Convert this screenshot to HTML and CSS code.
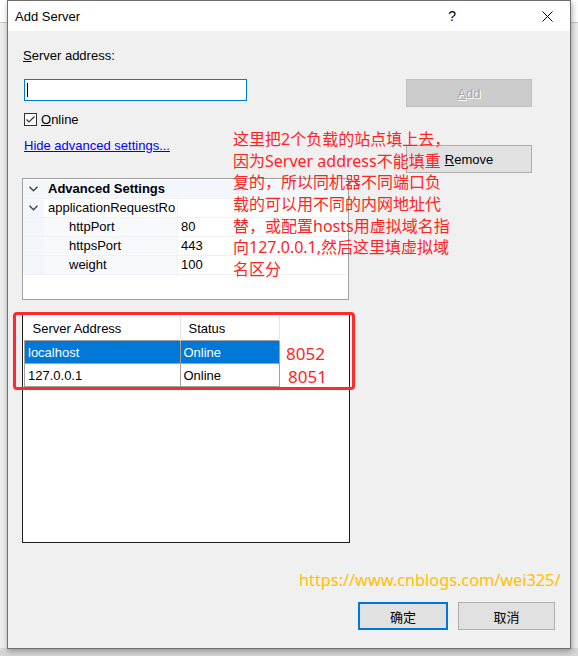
FILE: index.html
```html
<!DOCTYPE html>
<html lang="zh-CN">
<head>
    <meta charset="UTF-8">
    <meta name="viewport" content="width=device-width, initial-scale=1.0">
    <title>Add Server</title>
    <link rel="stylesheet" href="styles.css">
</head>
<body>
    <div id="desktop">
        <div id="dialog">
            <div id="title-bar">
                <span id="title-text">Add Server</span>
                <span id="help-btn">?</span>
                <svg id="close-btn" width="11" height="11" viewBox="0 0 11 11">
                    <path d="M0.5 0.5 L10.5 10.5 M10.5 0.5 L0.5 10.5" stroke="#000" stroke-width="1" fill="none"/>
                </svg>
            </div>

            <div id="main">
                <div id="left-col">
                    <div class="field-label"><u>S</u>erver address:</div>
                    <div id="address-box"><span class="caret"></span></div>

                    <div id="online-row">
                        <svg class="checkbox" width="13" height="13" viewBox="0 0 13 13">
                            <rect x="0.5" y="0.5" width="12" height="12" fill="#fff" stroke="#333"/>
                            <path d="M2.5 6.5 L5 9 L10.5 3.5" stroke="#333" stroke-width="1.2" fill="none"/>
                        </svg>
                        <span><u>O</u>nline</span>
                    </div>

                    <a id="advanced-link" href="#">Hide advanced settings...</a>

                    <div id="prop-grid">
                        <div class="pg-row pg-category">
                            <div class="pg-gutter">
                                <svg width="9" height="6" viewBox="0 0 9 6"><path d="M0.5 0.8 L4.5 4.8 L8.5 0.8" stroke="#444" stroke-width="1.4" fill="none"/></svg>
                            </div>
                            <div class="pg-name pg-wide">Advanced Settings</div>
                        </div>
                        <div class="pg-row">
                            <div class="pg-gutter">
                                <svg width="9" height="6" viewBox="0 0 9 6"><path d="M0.5 0.8 L4.5 4.8 L8.5 0.8" stroke="#444" stroke-width="1.4" fill="none"/></svg>
                            </div>
                            <div class="pg-name">applicationRequestRo</div>
                            <div class="pg-value"></div>
                        </div>
                        <div class="pg-row">
                            <div class="pg-gutter"></div>
                            <div class="pg-name pg-child">httpPort</div>
                            <div class="pg-value">80</div>
                        </div>
                        <div class="pg-row">
                            <div class="pg-gutter"></div>
                            <div class="pg-name pg-child">httpsPort</div>
                            <div class="pg-value">443</div>
                        </div>
                        <div class="pg-row">
                            <div class="pg-gutter"></div>
                            <div class="pg-name pg-child">weight</div>
                            <div class="pg-value">100</div>
                        </div>
                    </div>

                    <div id="server-list">
                        <table>
                            <thead>
                                <tr>
                                    <th class="col-addr">Server Address</th>
                                    <th class="col-status">Status</th>
                                </tr>
                            </thead>
                            <tbody>
                                <tr class="selected">
                                    <td>localhost</td>
                                    <td>Online</td>
                                </tr>
                                <tr>
                                    <td>127.0.0.1</td>
                                    <td>Online</td>
                                </tr>
                            </tbody>
                        </table>
                    </div>
                </div>

                <div id="right-col">
                    <button id="add-btn" class="win-btn" disabled><u>A</u>dd</button>
                    <button id="remove-btn" class="win-btn"><u>R</u>emove</button>
                </div>
            </div>

            <div id="footer">
                <button id="ok-btn" class="win-btn">确定</button>
                <button id="cancel-btn" class="win-btn">取消</button>
            </div>

            <!-- notes written over the dialog -->
            <div id="note-text">这里把2个负载的站点填上去，<br>因为Server address不能填重<br>复的，所以同机器不同端口负<br>载的可以用不同的内网地址代<br>替，或配置hosts用虚拟域名指<br>向127.0.0.1,然后这里填虚拟域<br>名区分</div>
            <div id="note-box"></div>
            <div class="note-port" id="port-a">8052</div>
            <div class="note-port" id="port-b">8051</div>
            <div id="blog-url">https://www.cnblogs.com/wei325/</div>
        </div>
    </div>
</body>
</html>
```

FILE: styles.css
```css
body {
    margin: 0;
    font-family: "Liberation Sans", "Noto Sans CJK SC", sans-serif;
    font-size: 13px;
    color: #000;
}

#desktop {
    width: 578px;
    height: 656px;
    overflow: hidden;
    background: linear-gradient(#fff 0, #fff 22px, #c8c8c8 22px, #c8c8c8 23px, #ededed 23px, #ededed 648px, #d6d6d6 648px);
}

#dialog {
    position: relative;
    margin-left: 7px;
    width: 562px;
    height: 647px;
    border: 1px solid #6f6f6f;
    background-color: #f0f0f0;
    box-shadow: 1px 2px 6px rgba(0, 0, 0, 0.35);
    display: flex;
    flex-direction: column;
}

#title-bar {
    height: 30px;
    background-color: #fff;
    display: flex;
    align-items: center;
    padding-left: 7px;
}

#title-text {
    flex: 1;
}

#help-btn {
    font-size: 14px;
    margin-right: 86px;
}

#close-btn {
    margin-right: 17px;
}

#main {
    display: flex;
    padding: 17px 0 0 14px;
}

#left-col {
    width: 328px;
    display: flex;
    flex-direction: column;
    align-items: flex-start;
}

.field-label {
    margin-left: 1px;
    line-height: 16px;
}

#address-box {
    margin: 15px 0 0 2px;
    width: 221px;
    height: 20px;
    border: 1px solid #0078d7;
    background-color: #fff;
    display: flex;
    align-items: center;
}

.caret {
    width: 1px;
    height: 14px;
    margin-left: 2px;
    background-color: #000;
}

#online-row {
    margin: 10px 0 0 2px;
    height: 16px;
    display: flex;
    align-items: center;
    gap: 4px;
}

#advanced-link {
    margin: 10px 0 0 2px;
    line-height: 17px;
    color: #0000ff;
}

/* property grid */
#prop-grid {
    margin-top: 24px;
    width: 325px;
    height: 119px;
    padding-top: 1px;
    border: 1px solid #a0a0a0;
    background-color: #fff;
}

.pg-row {
    display: grid;
    grid-template-columns: 21px 134px 1fr;
    height: 18px;
    border-bottom: 1px solid #eef1f5;
    line-height: 18px;
}

.pg-category {
    background-color: #f3f6fb;
    font-weight: bold;
}

.pg-gutter {
    background-color: #f3f6fb;
    display: flex;
    align-items: center;
    padding-left: 6px;
}

.pg-name {
    padding-left: 4px;
    white-space: nowrap;
    overflow: hidden;
    border-right: 1px solid #eef1f5;
}

.pg-wide {
    grid-column: 2 / 4;
    border-right: none;
}

.pg-child {
    padding-left: 25px;
    background-color: #f7f9fc;
}

.pg-value {
    padding-left: 3px;
}

/* server list */
#server-list {
    margin-top: 14px;
    width: 326px;
    height: 226px;
    border: 1px solid #1e1e1e;
    background-color: #fff;
    padding-top: 1px;
}

#server-list table {
    border-collapse: collapse;
    table-layout: fixed;
    width: 256px;
    margin-left: 1px;
}

#server-list th {
    height: 24px;
    padding: 0 0 0 8px;
    font-weight: normal;
    text-align: left;
    border-right: 1px solid #e5e5e5;
}

.col-addr {
    width: 147px;
}

#server-list td {
    height: 22px;
    padding: 0 0 0 3px;
    border: 1px solid #a0a0a0;
}

#server-list tr.selected td {
    background-color: #0078d7;
    color: #fff;
}

/* buttons */
.win-btn {
    font-family: inherit;
    font-size: 13px;
    height: 28px;
    background-color: #e1e1e1;
    border: 1px solid #adadad;
    padding: 0;
    color: #000;
}

#right-col {
    display: flex;
    flex-direction: column;
    margin-left: 56px;
    width: 126px;
}

#add-btn {
    margin-top: 31px;
    background-color: #cccccc;
    border-color: #bfbfbf;
    color: #a8a8a8;
    text-shadow: 1px 1px 0 #fff;
}

#remove-btn {
    margin-top: 38px;
}

#footer {
    margin-top: auto;
    display: flex;
    justify-content: flex-end;
    gap: 10px;
    padding: 0 15px 18px 0;
}

#ok-btn {
    width: 90px;
    border: 2px solid #0078d7;
}

#cancel-btn {
    width: 97px;
}

/* annotations */
#note-text {
    position: absolute;
    left: 225px;
    top: 128px;
    font-family: "Noto Sans", "Noto Sans CJK SC", sans-serif;
    font-size: 16px;
    line-height: 21.67px;
    color: #ff2424;
    white-space: nowrap;
}

#note-box {
    position: absolute;
    left: 5px;
    top: 311px;
    width: 342px;
    height: 78px;
    box-sizing: border-box;
    border: 3px solid #ff2a2a;
    border-radius: 4px;
}

.note-port {
    position: absolute;
    font-family: "Noto Sans", sans-serif;
    font-size: 17px;
    line-height: 20px;
    color: #ff2424;
}

#port-a {
    left: 278px;
    top: 343px;
}

#port-b {
    left: 280px;
    top: 366px;
}

#blog-url {
    position: absolute;
    left: 291px;
    top: 569px;
    font-family: "Noto Sans", sans-serif;
    font-size: 16.3px;
    line-height: 20px;
    color: #ffc000;
}
```
